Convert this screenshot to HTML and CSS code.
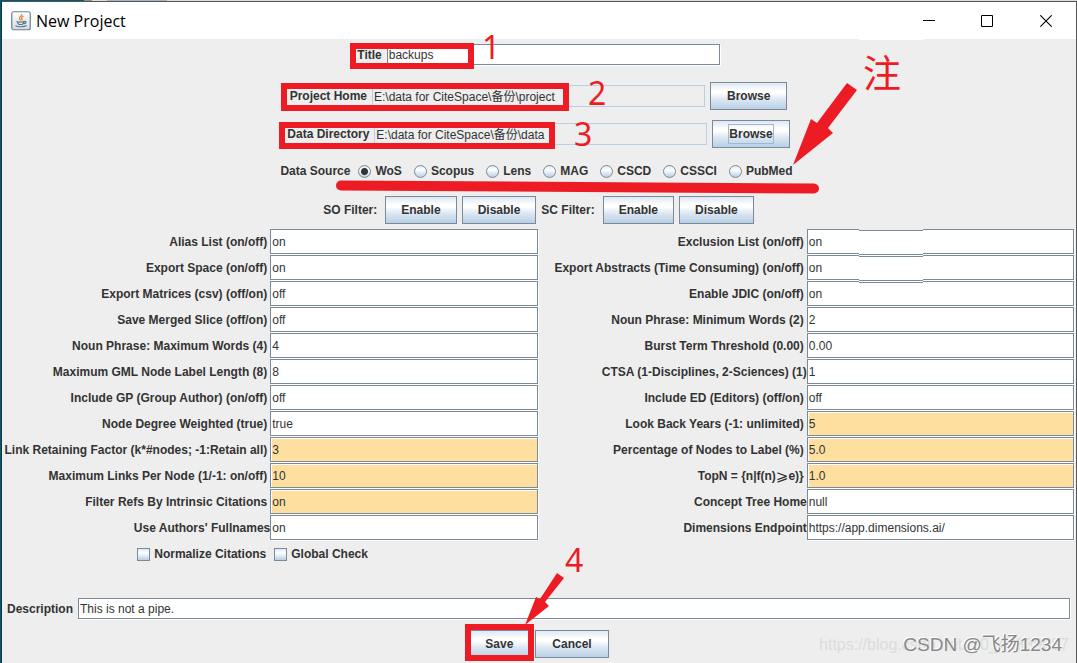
FILE: index.html
```html
<!DOCTYPE html>
<html lang="en">
<head>
<meta charset="utf-8">
<title>New Project</title>
<link rel="stylesheet" href="styles.css">
</head>
<body>
<div class="desktop">
<div class="window">
  <header class="titlebar">
    <svg class="app-icon" width="20" height="20" viewBox="0 0 20 20" aria-hidden="true">
      <defs><linearGradient id="ic" x1="0" y1="0" x2="0" y2="1"><stop offset="0" stop-color="#fff"/><stop offset="1" stop-color="#d5dade"/></linearGradient></defs>
      <rect x=".75" y=".75" width="18.5" height="18" rx="2" fill="url(#ic)" stroke="#6c8196" stroke-width="1.2"/>
      <path d="M10.8 3c.6 2-3.2 2.700-2.300 4.700.3.800 1 1.200 1.200 1.700M12.500 5.200c-1.900.9-2.600 1.800-1.500 3 .5.700.1 1.100-.3 1.400" fill="none" stroke="#e8873c" stroke-width="1.300"/>
      <path d="M5.500 10.200c2 .9 6 .9 8 0M6.300 10.500c.2 1.500.8 2.600 1.800 3h3c1.200-.5 1.800-1.500 2-3M13.500 10.500c2.300-.5 2 2.100-.7 2.200M4.500 14.800c2.500 1.300 8.500 1.300 11-.2" fill="none" stroke="#55788f" stroke-width="1.200"/>
    </svg>
    <h1 class="title">New Project</h1>
    <div class="win-controls">
      <button class="win-btn" aria-label="Minimize"><svg width="12" height="12"><path d="M0 5.500h12" stroke="#000"/></svg></button>
      <button class="win-btn" aria-label="Maximize"><svg width="12" height="12"><path d="M.5.5h11v11H.5z" fill="none" stroke="#000"/></svg></button>
      <button class="win-btn" aria-label="Close"><svg width="12" height="12"><path d="M.3.3l11.400 11.400M11.700.3L.3 11.700" stroke="#000" stroke-width="1.100"/></svg></button>
    </div>
  </header>

  <main class="content">
    <div class="row row-title">
      <label for="title">Title</label>
      <input class="field path" id="title" value="backups">
    </div>
    <div class="row row-path">
      <label for="home">Project Home</label>
      <input class="field path readonly" id="home" readonly value="E:\data for CiteSpace\备份\project">
      <button class="btn">Browse</button>
    </div>
    <div class="row row-path">
      <label for="dir">Data Directory</label>
      <input class="field path readonly" id="dir" readonly value="E:\data for CiteSpace\备份\data">
      <button class="btn focused"><span class="focus-ring">Browse</span></button>
    </div>
    <div class="row row-source" role="radiogroup" aria-labelledby="src">
      <span id="src">Data Source</span>
      <label class="choice"><input type="radio" name="src" class="radio" checked>WoS</label>
      <label class="choice"><input type="radio" name="src" class="radio">Scopus</label>
      <label class="choice"><input type="radio" name="src" class="radio">Lens</label>
      <label class="choice"><input type="radio" name="src" class="radio">MAG</label>
      <label class="choice"><input type="radio" name="src" class="radio">CSCD</label>
      <label class="choice"><input type="radio" name="src" class="radio">CSSCI</label>
      <label class="choice"><input type="radio" name="src" class="radio">PubMed</label>
    </div>
    <div class="row row-filter">
      <span class="spaced">SO Filter:</span>
      <button class="btn">Enable</button>
      <button class="btn">Disable</button>
      <span class="spaced">SC Filter:</span>
      <button class="btn">Enable</button>
      <button class="btn">Disable</button>
    </div>

    <div class="grid">
      <label class="cell spaced" for="a1">Alias List (on/off)</label><input class="field" id="a1" value="on">
      <label class="cell spaced" for="b1">Exclusion List (on/off)</label><input class="field" id="b1" value="on">
      <label class="cell spaced" for="a2">Export Space (on/off)</label><input class="field" id="a2" value="on">
      <label class="cell spaced" for="b2">Export Abstracts (Time Consuming) (on/off)</label><input class="field" id="b2" value="on">
      <label class="cell spaced" for="a3">Export Matrices (csv) (off/on)</label><input class="field" id="a3" value="off">
      <label class="cell spaced" for="b3">Enable JDIC (on/off)</label><input class="field" id="b3" value="on">
      <label class="cell spaced" for="a4">Save Merged Slice (off/on)</label><input class="field" id="a4" value="off">
      <label class="cell spaced" for="b4">Noun Phrase: Minimum Words (2)</label><input class="field" id="b4" value="2">
      <label class="cell spaced" for="a5">Noun Phrase: Maximum Words (4)</label><input class="field" id="a5" value="4">
      <label class="cell spaced" for="b5">Burst Term Threshold (0.00)</label><input class="field" id="b5" value="0.00">
      <label class="cell spaced" for="a6">Maximum GML Node Label Length (8)</label><input class="field" id="a6" value="8">
      <label class="cell" for="b6">CTSA (1-Disciplines, 2-Sciences) (1)</label><input class="field" id="b6" value="1">
      <label class="cell spaced" for="a7">Include GP (Group Author) (on/off)</label><input class="field" id="a7" value="off">
      <label class="cell spaced" for="b7">Include ED (Editors) (off/on)</label><input class="field" id="b7" value="off">
      <label class="cell spaced" for="a8">Node Degree Weighted (true)</label><input class="field" id="a8" value="true">
      <label class="cell spaced" for="b8">Look Back Years (-1: unlimited)</label><input class="field marked" id="b8" value="5">
      <label class="cell spaced" for="a9">Link Retaining Factor (k*#nodes; -1:Retain all)</label><input class="field marked" id="a9" value="3">
      <label class="cell spaced" for="b9">Percentage of Nodes to Label (%)</label><input class="field marked" id="b9" value="5.0">
      <label class="cell spaced" for="a10">Maximum Links Per Node (1/-1: on/off)</label><input class="field marked" id="a10" value="10">
      <label class="cell spaced" for="b10">TopN = {n|f(n)<span class="symbol">⩾</span>e)}</label><input class="field marked" id="b10" value="1.0">
      <label class="cell spaced" for="a11">Filter Refs By Intrinsic Citations</label><input class="field marked" id="a11" value="on">
      <label class="cell" for="b11">Concept Tree Home</label><input class="field" id="b11" value="null">
      <label class="cell" for="a12">Use Authors' Fullnames</label><input class="field" id="a12" value="on">
      <label class="cell" for="b12">Dimensions Endpoint</label><input class="field" id="b12" value="https://app.dimensions.ai/">
      <label class="choice cell"><input type="checkbox" class="check">Normalize Citations</label>
      <label class="choice"><input type="checkbox" class="check">Global Check</label>
    </div>

    <div class="row row-description">
      <label for="desc">Description</label>
      <input class="field grow" id="desc" value="This is not a pipe.">
    </div>
    <div class="row row-actions">
      <button class="btn">Save</button>
      <button class="btn">Cancel</button>
    </div>
  </main>
</div>

<svg class="notes" width="1077" height="663" viewBox="0 0 1077 663" aria-hidden="true">
  <path fill="#fff" d="M859 39h64v1h-64z"/>
  <path fill="#eee" d="M859 229h64v1h-64z"/>
  <path fill="#fff" d="M859 253h64v4h-64zM859 279h64v4h-64z"/>
  <path fill="#7a8a99" d="M859 230h64v1h-64zM859 254h64v1h-64zM859 256h64v1h-64zM859 280h64v1h-64zM859 282h64v1h-64z"/>
  <g fill="none" stroke="#ed1c24" stroke-width="6">
    <rect x="353" y="46" width="118" height="20"/>
    <rect x="284" y="86" width="282" height="22"/>
    <rect x="282" y="125" width="270" height="21"/>
    <rect x="468" y="627" width="63" height="31"/>
  </g>
  <path d="M341 185.500L814 188.500" stroke="#ed1c24" stroke-width="10" stroke-linecap="round"/>
  <path fill="#ed1c24" d="M847 83l10 7-29 38 5 5-40 32 18-46 6 4zM557 573l7 5-19 24 4 4-24 19 11-28 4 2z"/>
  <g fill="#ed1c24">
    <text class="note-num" x="482" y="59">1</text>
    <text class="note-num" x="588" y="105">2</text>
    <text class="note-num" x="574" y="146">3</text>
    <text class="note-num" x="565" y="572">4</text>
    <text class="note-cjk" x="863" y="87">注</text>
  </g>
</svg>
<div class="watermark url">https://blog.csdn.net/m0_46339687</div>
<div class="watermark author">CSDN @飞扬1234</div>
</div>
</body>
</html>
```
FILE: styles.css
```css
* { box-sizing: border-box; }

body {
  margin: 0;
  background: #eee;
  color: #333;
  font: bold 12px/16px "Liberation Sans", Arial, "Noto Sans CJK SC", sans-serif;
}

.desktop {
  position: relative;
  min-height: 100vh;
  padding: 1px 0 0 1px;
  background: linear-gradient(90deg, #005a73 84px, #8d8d8d 84px, #8d8d8d 92px, #ddd 92px, #ddd 107px, #a5b4c8 107px, #a5b4c8 167px, #ddd 167px);
  overflow: hidden;
}

.window {
  min-height: calc(100vh - 1px);
  background: #eee;
  border: 1px solid #555;
  border-left-color: #17343d;
  border-bottom: 0;
}

.titlebar {
  display: flex;
  align-items: center;
  height: 37px;
  padding-left: 9px;
  background: #fff;
  color: #000;
}

.title {
  margin: 0 auto 0 5px;
  font: 16px/20px "Open Sans", "Noto Sans", sans-serif;
}

.win-controls { display: flex; }

.win-btn {
  display: flex;
  align-items: center;
  justify-content: center;
  width: 58px;
  height: 36px;
  padding: 0;
  border: 0;
  background: none;
}

.win-btn:last-child { width: 60px; }

.content { padding: 5px 1px 0 0; }

.row {
  display: flex;
  align-items: center;
  justify-content: center;
  gap: 5px;
}

.row-title { height: 21px; margin-bottom: 17px; }
.row-path { height: 28px; margin-bottom: 10px; }
.row-source { height: 26px; margin-bottom: 12px; gap: 4px; }
.row-filter { height: 28px; margin-bottom: 5px; }
.row-description { height: 21px; margin: 31px 5px 11px; }
.row-actions { height: 28px; margin-bottom: 5px; }

.spaced { padding-right: 3px; }

.field {
  min-width: 0;
  height: 25px;
  margin: 0 1px 1px 0;
  padding: 0 1px;
  border: 1px solid #7a8a99;
  border-radius: 0;
  background: #fff;
  box-shadow: 1px 1px 0 #fff, inset 1px 1px 0 #fff;
  color: #333;
  font: 12px/16px "Liberation Sans", Arial, "Noto Sans CJK SC", sans-serif;
  outline: 0;
}

.row .field { height: 21px; margin: 0; }
.path { width: 333px; }

.row .readonly {
  height: 22px;
  padding-bottom: 2px;
  border-color: #b8cfe5;
  background: #eee;
  box-shadow: none;
}

.marked { background: #ffdfa0; }
.grow { flex: 1; }

.btn {
  height: 28px;
  padding: 0 16px;
  border: 1px solid #7a8a99;
  border-radius: 0;
  background: linear-gradient(#dde8f3, #fff 30%, #fff 38%, #dde8f3 62%, #b8cfe5);
  color: #333;
  font: inherit;
}

.focused,
.row-filter .btn { padding: 0 15px; }

.focus-ring {
  display: block;
  padding: 1px 0;
  border: 1px solid #a3b8cc;
}

.choice {
  display: flex;
  align-items: center;
  gap: 4px;
  padding: 0 4px;
}

.radio,
.check {
  appearance: none;
  width: 13px;
  height: 13px;
  margin: 0;
  border: 1px solid #7a8a99;
  background: linear-gradient(#dde8f3, #fff 35%, #b8cfe5);
}

.radio { border-radius: 50%; }

.radio:checked {
  background: radial-gradient(circle, #333 3px, transparent 4px), linear-gradient(#dde8f3, #fff 35%, #b8cfe5);
}

.grid {
  display: grid;
  grid-template-columns: repeat(4, minmax(0, 1fr));
  grid-auto-rows: 26px;
}

.cell {
  display: flex;
  align-items: center;
  justify-content: flex-end;
  white-space: nowrap;
}

.symbol { font: 15px/16px "DejaVu Sans", sans-serif; }

.notes {
  position: absolute;
  top: 0;
  left: 0;
  right: 0;
  margin: 0 auto;
  pointer-events: none;
}

.note-num { font: 32px "Noto Sans", sans-serif; }
.note-cjk { font: 38px "Noto Sans CJK SC", sans-serif; }

.watermark {
  position: absolute;
  right: 8px;
  white-space: nowrap;
  font-weight: normal;
  pointer-events: none;
}

.url {
  bottom: 8px;
  color: #dcdcdc;
  font-size: 16px;
  line-height: 20px;
}

.author {
  right: 15px;
  bottom: 6px;
  color: #888;
  font-size: 19px;
  line-height: 24px;
  text-shadow: -1px -1px 0 #fff;
}
```
